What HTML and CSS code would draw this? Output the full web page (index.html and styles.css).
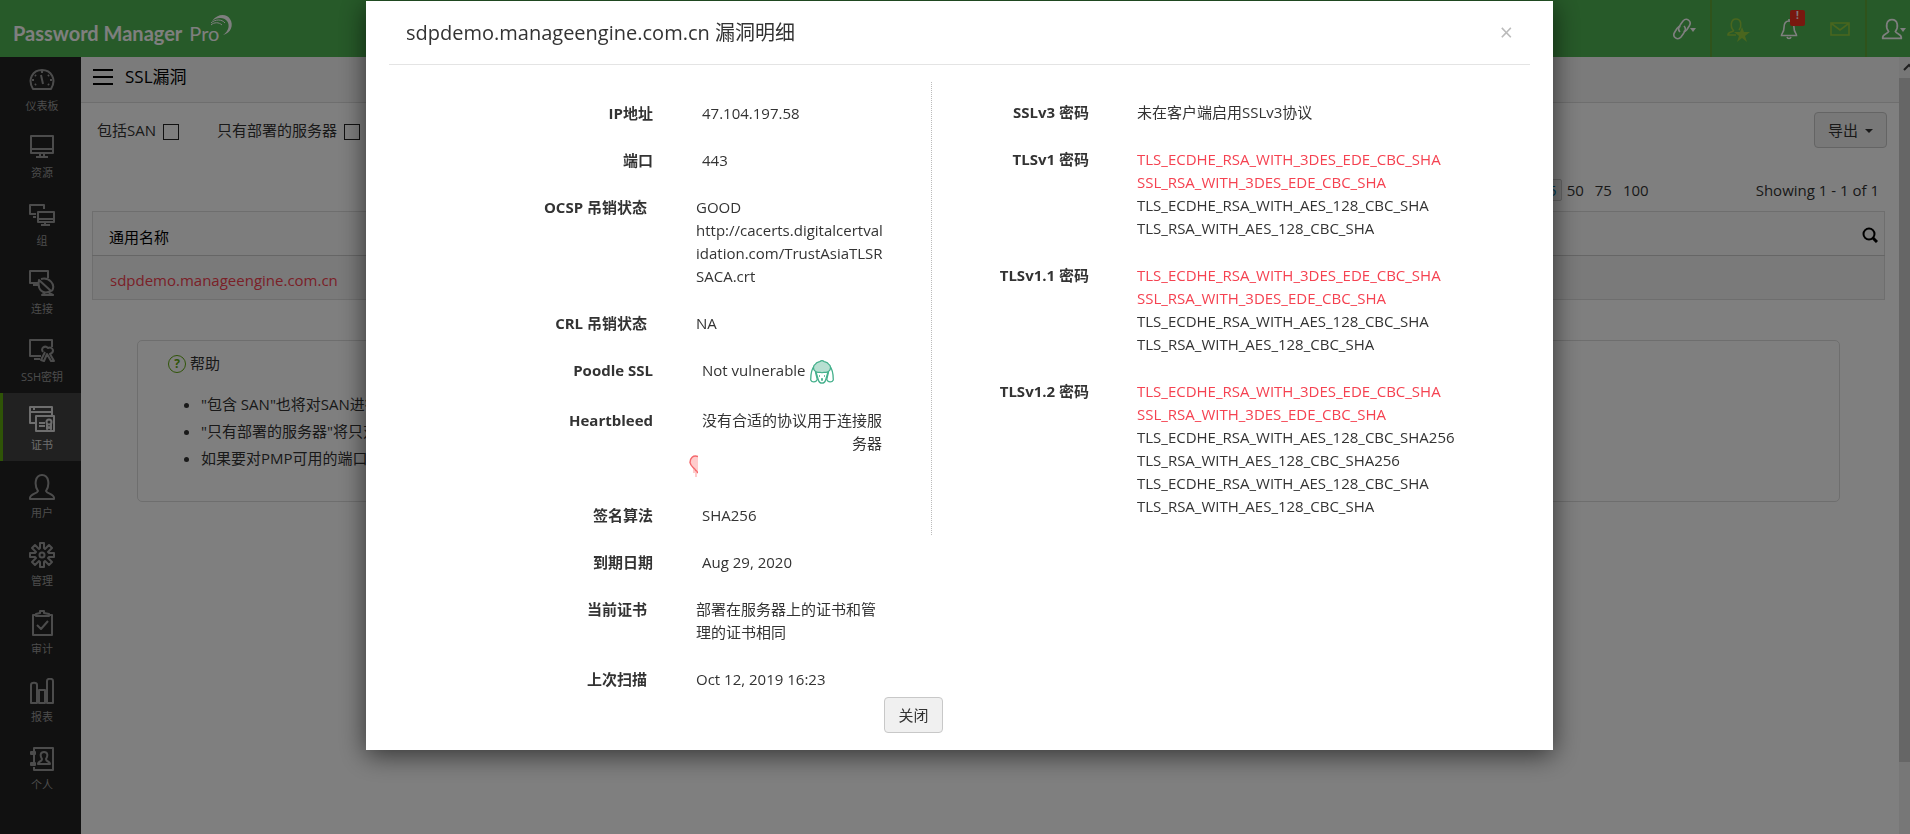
FILE: index.html
```html
<!DOCTYPE html>
<html lang="zh-CN">
<head>
<meta charset="utf-8">
<title>Password Manager Pro</title>
<link rel="stylesheet" href="styles.css">
</head>
<body>
<div class="app">
  <header class="topbar">
    <a class="logo" href="#"><span class="logo-bold">Password Manager</span><span>Pro</span>
      <svg class="logo-arc" viewBox="0 0 24 24" width="24" height="24"><path d="M2 8C8 0 17 1 20 6C24 12 21 20 13 22C19 18 20 12 17 8C14 4 7 4 2 8Z" fill="currentColor"/><path d="M1 10C5 6 12 6 15 10M1 12C4 9 9 9 12 12" fill="none" stroke="currentColor" stroke-width="1"/></svg></a>
    <nav class="tools" aria-label="工具">
      <button class="tool tool-link" aria-label="链接"><svg width="22" height="24" viewBox="0 0 22 24" fill="none" stroke="currentColor" stroke-width="1.600"><path d="M9 15C6.500 12.500 7.500 10 9.500 7.500L12 4C15.500 0 21 4 18.500 8.500L16 12.500C15 14 13.500 14.500 12.500 14.500"/><path d="M13 9C15.500 11.500 14.500 14 12.500 16.500L10 20C6.500 24 1 20 3.500 15.500L6 11.500C7 10 8.500 9.500 9.500 9.500"/></svg><span class="caret"></span></button>
      <div class="tool-group">
        <button class="tool olive" aria-label="请求"><svg width="24" height="26" viewBox="0 0 24 26"><path d="M10 19H2C1.500 15.500 7 16.500 7.500 14.500C4 11 4.500 3 10 3C15.500 3 16 10 13 14" fill="none" stroke="currentColor" stroke-width="1.600"/><path d="M16 11l2 5h6l-5 4 2 6-5-4-5 4 2-6-5-4h6z" fill="currentColor"/></svg></button>
        <button class="tool" aria-label="通知"><svg width="18" height="22" viewBox="0 0 18 22" fill="none" stroke="currentColor" stroke-width="1.600"><path d="M1.500 17.500H16.500C16.500 15 14 15 14 9.500C14 5 12 3 9 3C6 3 4 5 4 9.500C4 15 1.500 15 1.500 17.500ZM7 19C7.500 21 10.500 21 11 19M9 1V3"/></svg><span class="alert">!</span></button>
        <button class="tool olive" aria-label="邮件"><svg width="20" height="14" viewBox="0 0 20 14" fill="none" stroke="currentColor" stroke-width="1.600"><path d="M1 1H19V13H1ZM2 2L10 8L18 2"/></svg></button>
      </div>
      <button class="tool tool-user" aria-label="账户"><svg width="22" height="22" viewBox="0 0 26 26" fill="none" stroke="currentColor" stroke-width="2"><path d="M2 24C1 19 8 19 9 16C5 11 6 2 13 2C20 2 21 11 17 16C18 19 25 19 24 24Z"/></svg><span class="caret"></span></button>
    </nav>
  </header>
  <div class="shell">
    <nav class="side" aria-label="主导航">
      <a class="item" href="#"><svg class="ico" viewBox="0 0 26 26"><path d="M4 22H22C28 12 22 3 13 3C4 3-2 12 4 22ZM12 8L14 17M13 4V6M3 13H5M21 13H23M6 8L7 9M20 8L19 9M6 18L7 17M20 18L19 17"/></svg>仪表板</a>
      <a class="item" href="#"><svg class="ico" viewBox="0 0 26 26"><path d="M2 2H24V19H2ZM2 15H24M11 19V23M15 19V23M7 23H19"/></svg>资源</a>
      <a class="item" href="#"><svg class="ico" viewBox="0 0 26 26"><path d="M7 12H1V3H15V7M4 15H7M9 10H25V20H9ZM9 17H25M16 20V23M12 23H21"/></svg>组</a>
      <a class="item" href="#"><svg class="ico" viewBox="0 0 26 26"><path d="M9 13H1V1H19V8M4 15H9M10 10C8 20 14 25 22 21L10 10ZM12 9C20 7 27 14 23 21M20 23L24 25H13L17 22"/></svg>连接</a>
      <a class="item" href="#"><svg class="ico" viewBox="0 0 26 26"><path d="M12 18H1V2H23V9M5 21H11"/><path d="M14 14C11 10 16 7 19 10C24 8 26 14 21 16L25 23L22 23L18 16L15 23L12 22L16 14"/></svg>SSH密钥</a>
      <a class="item active" href="#"><svg class="ico" viewBox="0 0 26 26"><path d="M6 17H1V1H23V9M1 6H23M4 3H6M7 10H25V25H7ZM10 17H16M10 20H16"/><circle cx="20" cy="16" r="2.500"/><path d="M18 18V23L20 21L22 23V18"/></svg>证书</a>
      <a class="item" href="#"><svg class="ico" viewBox="0 0 26 26"><path d="M1 25C0 20 8 20 9 17C5 11 6 1 13 1C20 1 21 11 17 17C18 20 26 20 25 25Z"/></svg>用户</a>
      <a class="item" href="#"><svg class="ico" viewBox="0 0 26 26"><path d="M11 1H15V6L16 7L20 3L23 6L19 10L20 11H25V15H20L19 16L23 20L20 23L16 19L15 20V25H11V20L10 19L6 23L3 20L7 16L6 15H1V11H6L7 10L3 6L6 3L10 7L11 6Z"/><circle cx="13" cy="13" r="2.500"/></svg>管理</a>
      <a class="item" href="#"><svg class="ico" viewBox="0 0 26 26"><path d="M7 5H4V25H23V5H20M7 6V4L11 3V1H15V3L20 4V6ZM8 15L12 19L19 11"/></svg>审计</a>
      <a class="item" href="#"><svg class="ico" viewBox="0 0 26 26"><path d="M2 25V7C2 4 8 4 8 7V25ZM10 25V12H16V25ZM18 25V3C18 0 24 0 24 3V25Z"/></svg>报表</a>
      <a class="item" href="#"><svg class="ico" viewBox="0 0 26 26"><path d="M5 5V2H24V24H5V21M5 9V16M2 6H6V8H2ZM2 17H6V19H2ZM9 18C9 15 13 16 13 13C11 10 11 6 15 6C19 6 19 10 17 13C17 16 21 15 21 18Z"/></svg>个人</a>
    </nav>
    <div class="main">
      <div class="page">
        <div class="crumb"><button class="burger" aria-label="菜单"><i></i><i></i><i></i></button><h1>SSL漏洞</h1></div>
        <div class="filters">
          <label>包括SAN <input type="checkbox"></label>
          <label>只有部署的服务器 <input type="checkbox"></label>
          <button class="btn export">导出 <span class="caret"></span></button>
        </div>
        <div class="pager"><span class="sizes"><a class="size on" href="#">25</a><a href="#">50</a><a href="#">75</a><a href="#">100</a></span><span>Showing 1 - 1 of 1</span></div>
        <table class="grid">
          <thead><tr><th>通用名称</th><th class="search"><button aria-label="搜索"><svg width="16" height="16" viewBox="0 0 16 16" fill="none" stroke="currentColor"><circle cx="7" cy="7" r="5.500" stroke-width="2"/><path d="M10.500 10.500L15 15" stroke-width="3"/></svg></button></th></tr></thead>
          <tbody><tr><td colspan="2"><a href="#">sdpdemo.manageengine.com.cn</a></td></tr></tbody>
        </table>
        <section class="help">
          <h2><span class="q">?</span>帮助</h2>
          <ul><li>"包含 SAN"也将对SAN进行</li><li>"只有部署的服务器"将只对</li><li>如果要对PMP可用的端口</li></ul>
        </section>
      </div>
      <div class="scroll"><svg width="16" height="21" viewBox="0 0 16 21" fill="none" stroke="#404040" stroke-width="2"><path d="M5 13L10 8L15 13"/></svg><div class="thumb"></div></div>
    </div>
  </div>
</div>
<div class="veil">
  <div class="dialog" role="dialog" aria-labelledby="dlg-title">
    <div class="dlg-head"><h2 id="dlg-title">sdpdemo.manageengine.com.cn 漏洞明细</h2><button class="x" aria-label="关闭">×</button></div>
    <div class="cols">
      <dl class="left">
        <div class="row in"><dt>IP地址</dt><dd>47.104.197.58</dd></div>
        <div class="row in"><dt>端口</dt><dd>443</dd></div>
        <div class="row"><dt>OCSP 吊销状态</dt><dd>GOOD<br>http://cacerts.digitalcertval<wbr>idation.com/TrustAsiaTLSR<wbr>SACA.crt</dd></div>
        <div class="row"><dt>CRL 吊销状态</dt><dd>NA</dd></div>
        <div class="row in"><dt>Poodle SSL</dt><dd class="poodle">Not vulnerable <svg width="24" height="24" viewBox="0 0 24 24" fill="none" stroke="#45b08c" stroke-width="1.300" stroke-linejoin="round"><path d="M4.500 6C1.500 9 .7 15 .7 20C2 22.800 6 22.500 7.300 19.500L5.500 12M19.500 6C22.500 9 23.300 15 23.300 20C22 22.800 18 22.500 16.700 19.500L18.500 12"/><path d="M6 12L8.500 20.500C9.500 24 14.500 24 15.500 20.500L18 12" fill="#fff"/><path d="M5.500 11.500C2.500 9.500 3 5.500 5.500 4C6.500 1.500 9 2 10 1.500C11 .5 13 .5 14 1.500C15 2 17.500 1.500 18.500 4C21 5.500 21.500 9.500 18.500 11.500C16.500 13.500 14 11.500 12 12.700C10 11.500 7.500 13.500 5.500 11.500Z" fill="#b7dfd1"/><path d="M9 16H10M14 16H15M11 19H13M12 19V21"/></svg></dd></div>
        <div class="row in"><dt>Heartbleed</dt><dd class="bleed">没有合适的协议用于连接服务器<svg width="9" height="23" viewBox="0 0 9 23"><path d="M9 1.500C4 0 1 3 1 7.500C1.500 11 4.500 12.500 6 15L9 18Z" fill="#fcc"/><path d="M9 1.500C4 0 1 3 1 7.500C1.500 11 4.500 12.500 6 14.500L9 18" fill="none" stroke="#f4686c" stroke-width="1.500"/><path d="M5 14V18M7 16V22" stroke="#f99" stroke-width="1"/></svg></dd></div>
        <div class="row in"><dt>签名算法</dt><dd>SHA256</dd></div>
        <div class="row in"><dt>到期日期</dt><dd>Aug 29, 2020</dd></div>
        <div class="row"><dt>当前证书</dt><dd>部署在服务器上的证书和管理的证书相同</dd></div>
        <div class="row"><dt>上次扫描</dt><dd>Oct 12, 2019 16:23</dd></div>
      </dl>
      <dl class="right">
        <div class="row"><dt>SSLv3 密码</dt><dd>未在客户端启用SSLv3协议</dd></div>
        <div class="row"><dt>TLSv1 密码</dt><dd><span class="weak">TLS_ECDHE_RSA_WITH_3DES_EDE_CBC_SHA<br>SSL_RSA_WITH_3DES_EDE_CBC_SHA</span><br>TLS_ECDHE_RSA_WITH_AES_128_CBC_SHA<br>TLS_RSA_WITH_AES_128_CBC_SHA</dd></div>
        <div class="row"><dt>TLSv1.1 密码</dt><dd><span class="weak">TLS_ECDHE_RSA_WITH_3DES_EDE_CBC_SHA<br>SSL_RSA_WITH_3DES_EDE_CBC_SHA</span><br>TLS_ECDHE_RSA_WITH_AES_128_CBC_SHA<br>TLS_RSA_WITH_AES_128_CBC_SHA</dd></div>
        <div class="row"><dt>TLSv1.2 密码</dt><dd><span class="weak">TLS_ECDHE_RSA_WITH_3DES_EDE_CBC_SHA<br>SSL_RSA_WITH_3DES_EDE_CBC_SHA</span><br>TLS_ECDHE_RSA_WITH_AES_128_CBC_SHA256<br>TLS_RSA_WITH_AES_128_CBC_SHA256<br>TLS_ECDHE_RSA_WITH_AES_128_CBC_SHA<br>TLS_RSA_WITH_AES_128_CBC_SHA</dd></div>
      </dl>
    </div>
    <div class="foot"><button class="btn">关闭</button></div>
  </div>
</div>
</body>
</html>
```
FILE: styles.css
```css
* { box-sizing: border-box; }
body { margin: 0; font: 15px/23px "Open Sans", "Noto Sans CJK SC", sans-serif; color: #333; background: #fff; }
button { font: inherit; color: inherit; background: none; border: 0; padding: 0; }
a { color: inherit; text-decoration: none; }
h1, h2, dl, dd, ul { margin: 0; font-weight: 400; }
svg { flex: none; }

.app { display: flex; flex-direction: column; height: 100vh; overflow: hidden; }
.topbar { display: flex; justify-content: space-between; height: 57px; flex: none; background: #4eb452; color: #fff; }
.logo { display: flex; align-items: center; gap: 7px; padding: 8px 0 0 13px; font: 20px/24px Lato, sans-serif; }
.logo-bold { font-weight: 700; }
.logo-arc { margin: -16px 0 0 -16px; }
.tools { display: flex; }
.tool { position: relative; display: flex; align-items: center; justify-content: center; color: #fff; }
.tool-link { width: 54px; }
.tool .caret { border-width: 4px 3px 0; margin: 3px 0 0 -3px; }
.tool-group { display: flex; border: solid #5fa637; border-width: 0 2px; }
.tool-group .tool { width: 51px; }
.olive { color: #94cc3c; }
.tool-user { width: 43px; padding-left: 10px; }
.caret { width: 0; height: 0; border: 4px solid transparent; border-top-color: currentColor; border-bottom: 0; display: inline-block; vertical-align: middle; }
.alert { position: absolute; top: 10px; right: 9px; width: 15px; height: 16px; background: #f0301f; border-radius: 2px; font: 700 10px/10px "Open Sans", sans-serif; }

.shell { display: flex; flex: 1; min-height: 0; }
.side { width: 81px; flex: none; background: #222; }
.item { display: flex; flex-direction: column; align-items: center; justify-content: center; gap: 4px; height: 68px; padding: 6px 0 0 3px; font-size: 11px; line-height: 18px; color: #999; }
.item:first-child { height: 64px; padding-top: 4px; }
.ico { width: 26px; height: 26px; fill: none; stroke: currentColor; stroke-width: 2; stroke-linejoin: round; }
.item.active { background: #424242; border-left: 3px solid #5fa80f; padding-left: 0; color: #ddd; }
.main { display: flex; flex: 1; min-width: 0; }
.page { flex: 1; }
.crumb { display: flex; align-items: center; gap: 12px; height: 46px; padding: 0 12px 6px; background: #f7f7f7; border-bottom: 1px solid #ddd; }
.crumb h1 { font-size: 17px; color: #000; }
.burger { display: grid; gap: 5px; width: 20px; }
.burger i { height: 2px; background: #000; }
.filters { display: flex; align-items: center; gap: 38px; padding: 9px 12px 0 16px; }
.filters label { display: flex; align-items: center; gap: 7px; }
.filters input { appearance: none; width: 16px; height: 16px; margin: 4px 0 0; border: 1px solid #222; }
.btn { height: 36px; padding: 0 13px; background: #f0f0f0; border: 1px solid #c8c8c8; border-radius: 4px; }
.export { margin-left: auto; }
.export .caret { margin-left: 3px; }
.pager { display: flex; justify-content: flex-end; gap: 107px; padding: 26px 20px 5px; line-height: 32px; }
.sizes { display: flex; align-items: center; gap: 11px; }
.size { line-height: 20px; padding: 0 4px; margin-right: -6px; border: 1px solid #ccc; border-radius: 2px; color: #07a; background: #eee; }
.grid { width: calc(100% - 25px); margin: 0 13px 0 11px; border-collapse: collapse; border: 1px solid #ddd; color: #000; }
.grid th { height: 44px; padding: 7px 6px 0 16px; text-align: left; font-weight: 400; background: #fafafa; border-bottom: 1px solid #ccc; }
.grid .search { text-align: right; }
.grid td { height: 44px; padding: 6px 0 0 17px; background: #f4f4f4; color: #f54251; }
.help { margin: 40px 59px 0 56px; padding: 11px 30px; height: 162px; border: 1px solid #ddd; border-radius: 5px; }
.help h2 { display: flex; align-items: center; gap: 4px; font-size: 15px; }
.q { width: 18px; height: 18px; border: 1px solid #5fa80f; border-radius: 50%; color: #5fa80f; font-weight: 700; font-size: 12px; line-height: 16px; text-align: center; }
.help ul { padding: 16px 0 0 33px; line-height: 27px; }
.scroll { display: flex; flex-direction: column; width: 11px; flex: none; overflow: hidden; background: #eee; }
.thumb { flex: none; height: 88%; background: #cdcdcd; }

.veil { position: fixed; inset: 0; padding-top: 1px; background: rgba(0, 0, 0, .5); }
.dialog { width: calc(100% - 723px); margin-left: 366px; padding: 0 23px 17px; background: #fff; box-shadow: 0 5px 25px rgba(0, 0, 0, .6); }
.dlg-head { display: flex; align-items: center; justify-content: space-between; height: 64px; padding: 0 17px; border-bottom: 1px solid #e4e4e4; }
.dlg-head h2 { font-size: 20px; line-height: 30px; }
.x { font-size: 23px; color: #bbb; }
.cols { display: grid; grid-template-columns: 542px 1fr; align-items: start; padding-top: 17px; }
.row { display: flex; margin-bottom: 24px; }
dt { width: 258px; flex: none; text-align: right; font-weight: 700; }
.left { padding-top: 20px; }
.left dd { width: 186px; margin-left: 49px; }
.left .in { padding-left: 6px; }
.left .in dd { width: 180px; }
.left .row:last-child { margin-bottom: 6px; }
.poodle { display: flex; gap: 4px; height: 26px; }
.poodle svg { margin-top: 1px; }
.left dd.bleed { position: relative; padding-bottom: 25px; text-align: right; }
.bleed svg { position: absolute; left: -13px; bottom: 2px; }
.right { padding-top: 19px; border-left: 1px dotted #bbb; }
.right dt { width: 157px; }
.right dd { margin-left: 48px; }
.right .row:last-child { margin-bottom: 17px; }
.weak { color: #f54251; }
.foot { display: flex; justify-content: center; padding-right: 92px; }
```
